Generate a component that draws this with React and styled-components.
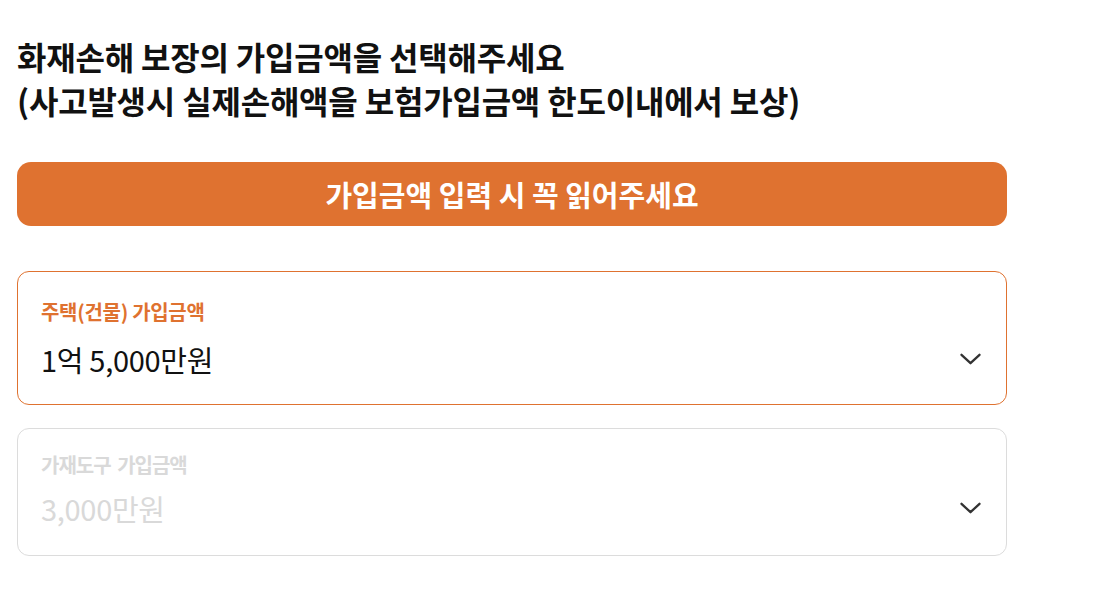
import React from "react";
import styled, { createGlobalStyle } from "styled-components";

const GlobalStyle = createGlobalStyle`
  body {
    margin: 0;
    background: #fff;
    font-family: "Noto Sans CJK KR", "Noto Sans", sans-serif;
  }
`;

const Page = styled.div`
  width: 990px;
  padding: 34px 0 0 17px;
`;

const Title = styled.h1`
  margin: 0;
  font-size: 32px;
  line-height: 44px;
  font-weight: 700;
  letter-spacing: -0.2px;
  color: #111;
`;

const NoticeButton = styled.button`
  display: flex;
  align-items: center;
  justify-content: center;
  width: 100%;
  height: 64px;
  margin-top: 40px;
  border: 0;
  border-radius: 14px;
  background: #df7230;
  color: #fff;
  font-family: inherit;
  font-size: 29px;
  font-weight: 700;
  cursor: pointer;
`;

const Fields = styled.div`
  display: flex;
  flex-direction: column;
  gap: 23px;
  margin-top: 45px;
`;

const Field = styled.div`
  display: flex;
  flex-direction: column;
  justify-content: center;
  gap: ${(p) => (p.active ? "15px" : "11px")};
  box-sizing: border-box;
  height: ${(p) => (p.active ? "134px" : "128px")};
  padding: ${(p) => (p.active ? "0 25px 0 23px" : "0 25px 5px 23px")};
  border: 1px solid ${(p) => (p.active ? "#df7230" : "#dcdcdc")};
  border-radius: 12px;
  background: #fff;
`;

const Label = styled.span`
  font-size: 20px;
  line-height: 26px;
  font-weight: 700;
  letter-spacing: ${(p) => (p.active ? "-0.3px" : "-1px")};
  word-spacing: ${(p) => (p.active ? "0" : "3px")};
  color: ${(p) => (p.active ? "#df7230" : "#d9d9d9")};
`;

const ValueRow = styled.div`
  display: flex;
  align-items: center;
  justify-content: space-between;
`;

const Value = styled.span`
  font-size: 29px;
  line-height: 38px;
  font-weight: 400;
  letter-spacing: -0.3px;
  color: ${(p) => (p.active ? "#111" : "#d9d9d9")};
`;

const Chevron = () => (
  <svg width="21" height="12" viewBox="0 0 21 12" fill="none">
    <path d="M1.5 1.8l9 8.4 9-8.4" stroke="#333" strokeWidth="2.3" strokeLinecap="round" strokeLinejoin="round" />
  </svg>
);

const fields = [
  { label: "주택(건물) 가입금액", value: "1억 5,000만원", active: true },
  { label: "가재도구 가입금액", value: "3,000만원", active: false },
];

export default function App() {
  return (
    <>
      <GlobalStyle />
      <Page>
        <Title>
          화재손해 보장의 가입금액을 선택해주세요
          <br />
          (사고발생시 실제손해액을 보험가입금액 한도이내에서 보상)
        </Title>
        <NoticeButton>가입금액 입력 시 꼭 읽어주세요</NoticeButton>
        <Fields>
          {fields.map((f) => (
            <Field key={f.label} active={f.active}>
              <Label active={f.active}>{f.label}</Label>
              <ValueRow>
                <Value active={f.active}>{f.value}</Value>
                <Chevron />
              </ValueRow>
            </Field>
          ))}
        </Fields>
      </Page>
    </>
  );
}
